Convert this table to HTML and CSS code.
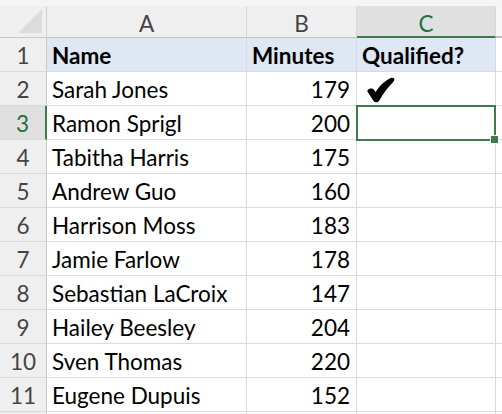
FILE: index.html
```html
<!DOCTYPE html>
<html>
<head>
<meta charset="utf-8">
<link rel="stylesheet" href="styles.css">
</head>
<body>
<div class="sheet">
  <div class="strip"></div>
  <div class="grid">
    <div class="corner"><div class="tri"></div></div>
    <div class="colh">A</div>
    <div class="colh">B</div>
    <div class="colh sel">C</div>
    <div class="colh rest"></div>

    <div class="rowh">1</div>
    <div class="cell hd">Name</div>
    <div class="cell hd num-hd">Minutes</div>
    <div class="cell hd">Qualified?</div>
    <div class="cell last"></div>

    <div class="rowh">2</div>
    <div class="cell">Sarah Jones</div>
    <div class="cell num">179</div>
    <div class="cell chk"><svg width="30" height="26" viewBox="0 0 28 24"><path d="M2 13 C3 11.5 5 10.8 6.4 11.8 L9 15.2 C13 9 17.5 4.2 23.8 1.4 C25.3 0.9 26.3 2 25.4 3.2 C20 8.8 15.2 14.6 11.8 21.4 C10.8 23 8.6 23.1 7.6 21.6 Z" fill="#000" stroke="#000" stroke-width="1.6" stroke-linejoin="round"/></svg></div>
    <div class="cell last"></div>

    <div class="rowh rsel">3</div>
    <div class="cell">Ramon Sprigl</div>
    <div class="cell num">200</div>
    <div class="cell active"><span class="handle"></span></div>
    <div class="cell last"></div>

    <div class="rowh">4</div>
    <div class="cell">Tabitha Harris</div>
    <div class="cell num">175</div>
    <div class="cell"></div>
    <div class="cell last"></div>

    <div class="rowh">5</div>
    <div class="cell">Andrew Guo</div>
    <div class="cell num">160</div>
    <div class="cell"></div>
    <div class="cell last"></div>

    <div class="rowh">6</div>
    <div class="cell">Harrison Moss</div>
    <div class="cell num">183</div>
    <div class="cell"></div>
    <div class="cell last"></div>

    <div class="rowh">7</div>
    <div class="cell">Jamie Farlow</div>
    <div class="cell num">178</div>
    <div class="cell"></div>
    <div class="cell last"></div>

    <div class="rowh">8</div>
    <div class="cell">Sebastian LaCroix</div>
    <div class="cell num">147</div>
    <div class="cell"></div>
    <div class="cell last"></div>

    <div class="rowh">9</div>
    <div class="cell">Hailey Beesley</div>
    <div class="cell num">204</div>
    <div class="cell"></div>
    <div class="cell last"></div>

    <div class="rowh">10</div>
    <div class="cell">Sven Thomas</div>
    <div class="cell num">220</div>
    <div class="cell"></div>
    <div class="cell last"></div>

    <div class="rowh">11</div>
    <div class="cell">Eugene Dupuis</div>
    <div class="cell num">152</div>
    <div class="cell"></div>
    <div class="cell last"></div>

    <div class="rowh"></div>
    <div class="cell"></div>
    <div class="cell num"></div>
    <div class="cell"></div>
    <div class="cell last"></div>
  </div>
</div>
</body>
</html>
```
FILE: styles.css
```css
html, body {
  margin: 0;
  padding: 0;
  background: #fff;
  overflow: hidden;
}
.sheet {
  width: 502px;
  height: 414px;
  overflow: hidden;
  font-family: "Lato", "Liberation Sans", sans-serif;
  font-size: 22.5px;
  color: #000;
}
.strip {
  height: 6px;
  background: #f5f5f5;
}
.grid {
  display: grid;
  grid-template-columns: 47px 200px 110px 139px 6px;
  grid-template-rows: 32px repeat(12, 34px);
}
.corner {
  background: #efefef;
  border-right: 1px solid #d0d0d0;
  border-bottom: 1px solid #c8c8c8;
  position: relative;
}
.tri {
  position: absolute;
  right: 4px;
  bottom: 4px;
  width: 0;
  height: 0;
  border-left: 24px solid transparent;
  border-bottom: 24px solid #dcdcdc;
}
.colh {
  background: #efefef;
  border-right: 1px solid #d6d6d6;
  border-bottom: 1px solid #c4c4c4;
  color: #444;
  display: flex;
  align-items: center;
  justify-content: center;
  padding-top: 4px;
  box-sizing: border-box;
}
.colh.sel {
  background: #e0e0e0;
  color: #217346;
  border-bottom: 2px solid #3f7a4a;
}
.colh.rest {
  background: #f7f7f7;
  border-right: none;
  border-bottom: 2px solid #bdbdbd;
}
.rowh {
  background: #efefef;
  border-right: 1px solid #c8c8c8;
  border-bottom: 1px solid #dadada;
  color: #444;
  display: flex;
  align-items: flex-end;
  justify-content: center;
  padding-bottom: 2px;
  box-sizing: border-box;
}
.rowh.rsel {
  background: #e0e0e0;
  color: #217346;
  border-right: 2px solid #3f7a4a;
}
.cell {
  border-right: 1px solid #dadada;
  border-bottom: 1px solid #dadada;
  display: flex;
  align-items: flex-end;
  padding: 0 0 2px 5px;
  box-sizing: border-box;
  white-space: nowrap;
  overflow: hidden;
}
.cell.last {
  border-right: none;
  padding: 0;
}
.hd {
  background: #dde8f4;
  font-weight: bold;
}
.num {
  justify-content: flex-end;
  padding-right: 6px;
}
.num-hd {
  padding-left: 5px;
}
.chk {
  align-items: center;
  padding: 3px 0 0 9px;
}
.cell.active {
  position: relative;
  overflow: visible;
  border: 2px solid #3f7a4a;
  margin: -1px 0 -1px -1px;
  z-index: 2;
}
.handle {
  position: absolute;
  right: -5px;
  bottom: -5px;
  width: 7px;
  height: 7px;
  background: #3f7a4a;
  border: 1px solid #fff;
}
```
